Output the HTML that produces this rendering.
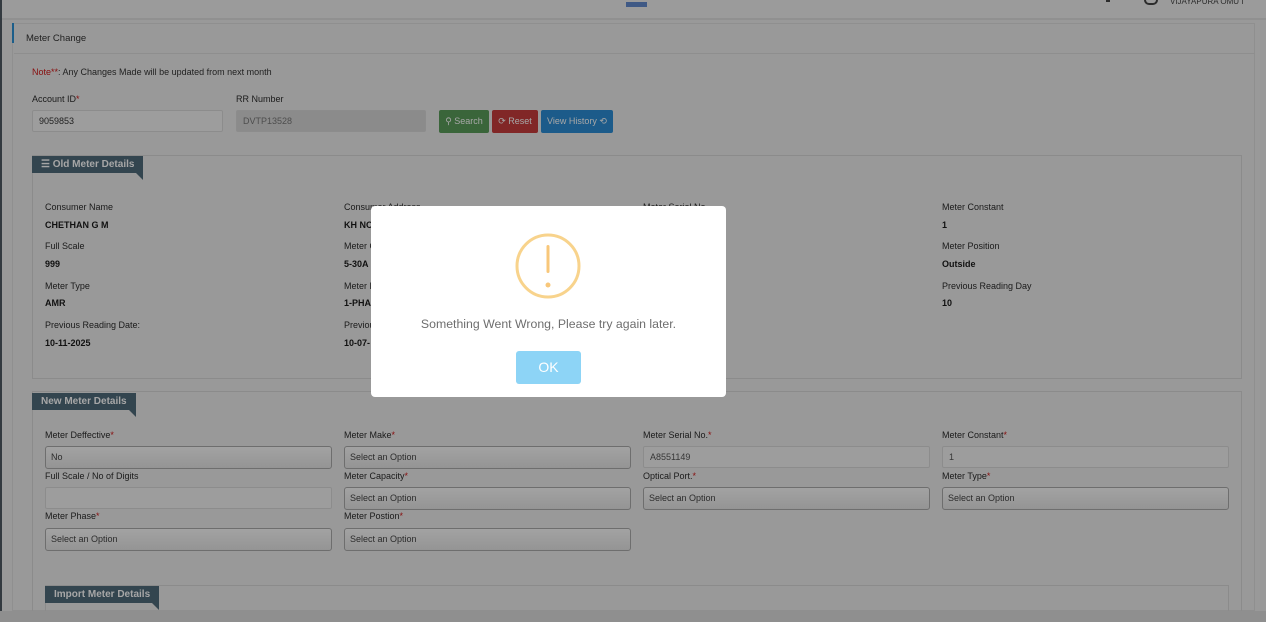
<!DOCTYPE html>
<html><head><meta charset="utf-8"><style>
*{box-sizing:border-box;margin:0;padding:0}
html,body{width:1266px;height:622px;overflow:hidden;background:#ececec}
body{font-family:"Liberation Sans",sans-serif;font-size:9px;color:#1f1f1f;position:relative}
.a{position:absolute}
.lbl{position:absolute;font-size:9px;color:#2b2b2b;white-space:nowrap}
.val{position:absolute;font-size:9px;font-weight:bold;color:#1a1a1a;white-space:nowrap}
.r{color:#d01818}
.inp{position:absolute;height:22px;border:1px solid #d8d8d8;border-radius:2px;background:#f2f2f2;padding-left:6px;line-height:20px;font-size:9px;color:#555}
.sel{position:absolute;height:23px;border:1px solid #aaa;border-radius:3px;background:linear-gradient(#fafafa,#e4e4e4);padding-left:5px;line-height:21px;font-size:9px;color:#444}
.fs{position:absolute;border:1px solid #d6d6d6}
.tag{position:absolute;background:#4f6a7a;color:#fff;font-weight:bold;font-size:10px;line-height:17px;padding-left:9px}
.tag:after{content:"";position:absolute;right:0;bottom:-7px;border-top:7px solid #4f6a7a;border-left:7px solid transparent}
.btn{position:absolute;top:110px;height:23px;border-radius:2px;color:#fff;font-size:9px;line-height:23px;text-align:center}
</style></head><body>
<div class="a" style="left:0;top:0;width:2px;height:622px;background:#4f5963"></div>
<div class="a" style="left:2px;top:0;width:1264px;height:20px;background:#efefef;border-bottom:2px solid #dedede"></div>
<div class="a" style="left:626px;top:2px;width:21px;height:5px;background:#6189cc"></div>
<div class="a" style="left:1144px;top:0;width:14px;height:5px;border:2px solid #444;border-top:none;border-radius:0 0 8px 8px"></div>
<div class="a" style="left:1170px;top:-3px;font-size:8px;color:#444">VIJAYAPURA OMU I</div>
<div class="a" style="left:1106px;top:0;width:4px;height:2px;background:#444"></div>
<div class="a" style="left:12px;top:23px;width:1243px;height:588px;border:1px solid #dcdcdc;background:#ececec"></div>
<div class="a" style="left:12px;top:23px;width:2px;height:20px;background:#2c91d4"></div>
<div class="a" style="left:14px;top:53px;width:1241px;height:1px;background:#dadada"></div>
<div class="a" style="left:26px;top:33px;font-size:9.5px;color:#333">Meter Change</div>
<div class="a" style="left:32px;top:67px;font-size:9px;color:#333"><span class="r">Note**</span>: Any Changes Made will be updated from next month</div>
<div class="lbl" style="left:32px;top:94px">Account ID<span class="r">*</span></div>
<div class="lbl" style="left:236px;top:94px">RR Number</div>
<div class="inp" style="left:32px;top:110px;width:191px;color:#333">9059853</div>
<div class="inp" style="left:236px;top:110px;width:190px;background:#d6d6d6;color:#777">DVTP13528</div>
<div class="btn" style="left:439px;width:50px;background:#5a9c5a">&#9906; Search</div>
<div class="btn" style="left:492px;width:46px;background:#c63d3d">&#10227; Reset</div>
<div class="btn" style="left:541px;width:72px;background:#2b8dd4">View History &#10226;</div>

<div class="fs" style="left:32px;top:155px;width:1210px;height:224px"></div>
<div class="tag" style="left:32px;top:156px;width:111px">&#9776; Old Meter Details</div>
<div class="lbl" style="left:45px;top:202px">Consumer Name</div><div class="val" style="left:45px;top:220px">CHETHAN G M</div>
<div class="lbl" style="left:344px;top:202px">Consumer Address</div><div class="val" style="left:344px;top:220px">KH NO</div>
<div class="lbl" style="left:643px;top:202px">Meter Serial No</div>
<div class="lbl" style="left:942px;top:202px">Meter Constant</div><div class="val" style="left:942px;top:220px">1</div>
<div class="lbl" style="left:45px;top:241px">Full Scale</div><div class="val" style="left:45px;top:259px">999</div>
<div class="lbl" style="left:344px;top:241px">Meter Capacity</div><div class="val" style="left:344px;top:259px">5-30A</div>
<div class="lbl" style="left:942px;top:241px">Meter Position</div><div class="val" style="left:942px;top:259px">Outside</div>
<div class="lbl" style="left:45px;top:281px">Meter Type</div><div class="val" style="left:45px;top:298px">AMR</div>
<div class="lbl" style="left:344px;top:281px">Meter Phase</div><div class="val" style="left:344px;top:298px">1-PHA</div>
<div class="lbl" style="left:942px;top:281px">Previous Reading Day</div><div class="val" style="left:942px;top:298px">10</div>
<div class="lbl" style="left:45px;top:320px">Previous Reading Date:</div><div class="val" style="left:45px;top:338px">10-11-2025</div>
<div class="lbl" style="left:344px;top:320px">Previous</div><div class="val" style="left:344px;top:338px">10-07-</div>

<div class="fs" style="left:32px;top:391px;width:1210px;height:222px"></div>
<div class="tag" style="left:32px;top:393px;width:104px">New Meter Details</div>
<div class="lbl" style="left:45px;top:430px">Meter Deffective<span class="r">*</span></div>
<div class="lbl" style="left:344px;top:430px">Meter Make<span class="r">*</span></div>
<div class="lbl" style="left:643px;top:430px">Meter Serial No.<span class="r">*</span></div>
<div class="lbl" style="left:942px;top:430px">Meter Constant<span class="r">*</span></div>
<div class="sel" style="left:45px;top:446px;width:287px">No</div>
<div class="sel" style="left:344px;top:446px;width:287px">Select an Option</div>
<div class="inp" style="left:643px;top:446px;width:287px">A8551149</div>
<div class="inp" style="left:942px;top:446px;width:287px">1</div>
<div class="lbl" style="left:45px;top:471px">Full Scale / No of Digits</div>
<div class="lbl" style="left:344px;top:471px">Meter Capacity<span class="r">*</span></div>
<div class="lbl" style="left:643px;top:471px">Optical Port.<span class="r">*</span></div>
<div class="lbl" style="left:942px;top:471px">Meter Type<span class="r">*</span></div>
<div class="inp" style="left:45px;top:487px;width:287px"></div>
<div class="sel" style="left:344px;top:487px;width:287px">Select an Option</div>
<div class="sel" style="left:643px;top:487px;width:287px">Select an Option</div>
<div class="sel" style="left:942px;top:487px;width:287px">Select an Option</div>
<div class="lbl" style="left:45px;top:511px">Meter Phase<span class="r">*</span></div>
<div class="lbl" style="left:344px;top:511px">Meter Postion<span class="r">*</span></div>
<div class="sel" style="left:45px;top:528px;width:287px">Select an Option</div>
<div class="sel" style="left:344px;top:528px;width:287px">Select an Option</div>
<div class="fs" style="left:45px;top:585px;width:1184px;height:28px"></div>
<div class="tag" style="left:45px;top:586px;width:114px">Import Meter Details</div>
<div class="a" style="left:0;top:611px;width:1266px;height:11px;background:#dcdcdc"></div>

<div class="a" style="left:0;top:0;width:1266px;height:622px;background:rgba(0,0,0,0.35)"></div>

<div class="a" style="left:371px;top:206px;width:355px;height:191px;background:#fff;border-radius:4px"></div>
<svg class="a" style="left:514px;top:232px" width="68" height="68" viewBox="0 0 68 68">
<circle cx="34" cy="34" r="31" fill="none" stroke="#f8d38c" stroke-width="3"/>
<rect x="32.5" y="13" width="3" height="28" rx="1.5" fill="#f8c77a"/>
<circle cx="34" cy="53" r="2.5" fill="#f8c77a"/>
</svg>
<div class="a" style="left:371px;top:317px;width:355px;text-align:center;font-size:12.3px;color:#6e6e6e">Something Went Wrong, Please try again later.</div>
<div class="a" style="left:516px;top:351px;width:65px;height:33px;background:#8dd4f6;border-radius:3px;color:#fff;font-size:14px;line-height:33px;text-align:center">OK</div>
</body></html>
